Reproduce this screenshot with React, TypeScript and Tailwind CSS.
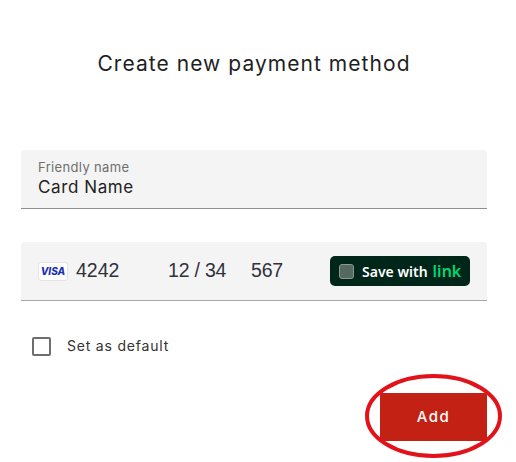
const App = () => {
  return (
    <div className="h-[462px] w-[516px] overflow-hidden bg-white pl-[21px] pt-[53px] font-['Inter',sans-serif] text-[#222]">
      <div className="w-[466px]">
        <h1 className="h-[22px] text-center text-[21px] leading-[22px] font-normal tracking-[1.05px] text-[#1f1f1f]">
          Create new payment method
        </h1>

        <div className="mt-[75px] h-[59px] rounded-t-[4px] border-b border-[#8f8f8f] bg-[#f4f4f4] pl-[17px] pt-[10px]">
          <div className="text-[13px] leading-[15px] tracking-[0.35px] text-[#6f6f6f]">Friendly name</div>
          <div className="mt-[2px] text-[17px] leading-[20px] tracking-[0.6px] text-[#222]">Card Name</div>
        </div>

        <div className="mt-[33px] flex h-[59px] items-center rounded-t-[4px] border-b border-[#a8a8a8] bg-[#f4f4f4] px-[17px] font-['Liberation_Sans',sans-serif] text-[19.5px] text-[#30313d]">
          <div className="flex h-[19px] w-[30px] items-center justify-center rounded-[3px] border border-[#e3e3e8] bg-white font-['Inter',sans-serif] text-[10px] leading-none font-extrabold italic text-[#1a32b8]">
            VISA
          </div>
          <span className="ml-[8px] w-[92px]">4242</span>
          <span className="w-[83px] tracking-[-0.2px]">12 / 34</span>
          <span className="tracking-[-0.2px]">567</span>
          <div className="ml-auto flex h-[30px] w-[140px] items-center rounded-[5px] bg-[#00261a] pl-[9px] font-['Noto_Sans',sans-serif] text-[14px] font-semibold text-white">
            <span className="h-[15px] w-[15px] rounded-[3px] border border-[#8a9a92] bg-[#54695f]"></span>
            <span className="ml-[8px]">Save with</span>
            <span className="ml-[5px] text-[16px] text-[#00d66f]">link</span>
          </div>
        </div>

        <div className="ml-[11px] mt-[36px] flex items-center">
          <span className="h-[19px] w-[19px] rounded-[2px] border-2 border-[#6e6e6e] bg-white"></span>
          <span className="ml-[16px] mb-[2px] text-[14px] leading-[17px] tracking-[0.8px] text-[#333]">Set as default</span>
        </div>

        <div className="relative ml-auto mt-[37px] h-[48px] w-[107px]">
          <button className="h-full w-full rounded-[2px] bg-[#c32113] text-[15px] font-medium tracking-[1.4px] text-white">
            Add
          </button>
          <svg className="absolute left-[-15px] top-[-19px]" width="137" height="84" viewBox="0 0 137 84" fill="none">
            <ellipse cx="68.5" cy="42" rx="66.5" ry="40" stroke="#e2121b" strokeWidth="4" />
          </svg>
        </div>
      </div>
    </div>
  );
};

export default App;
